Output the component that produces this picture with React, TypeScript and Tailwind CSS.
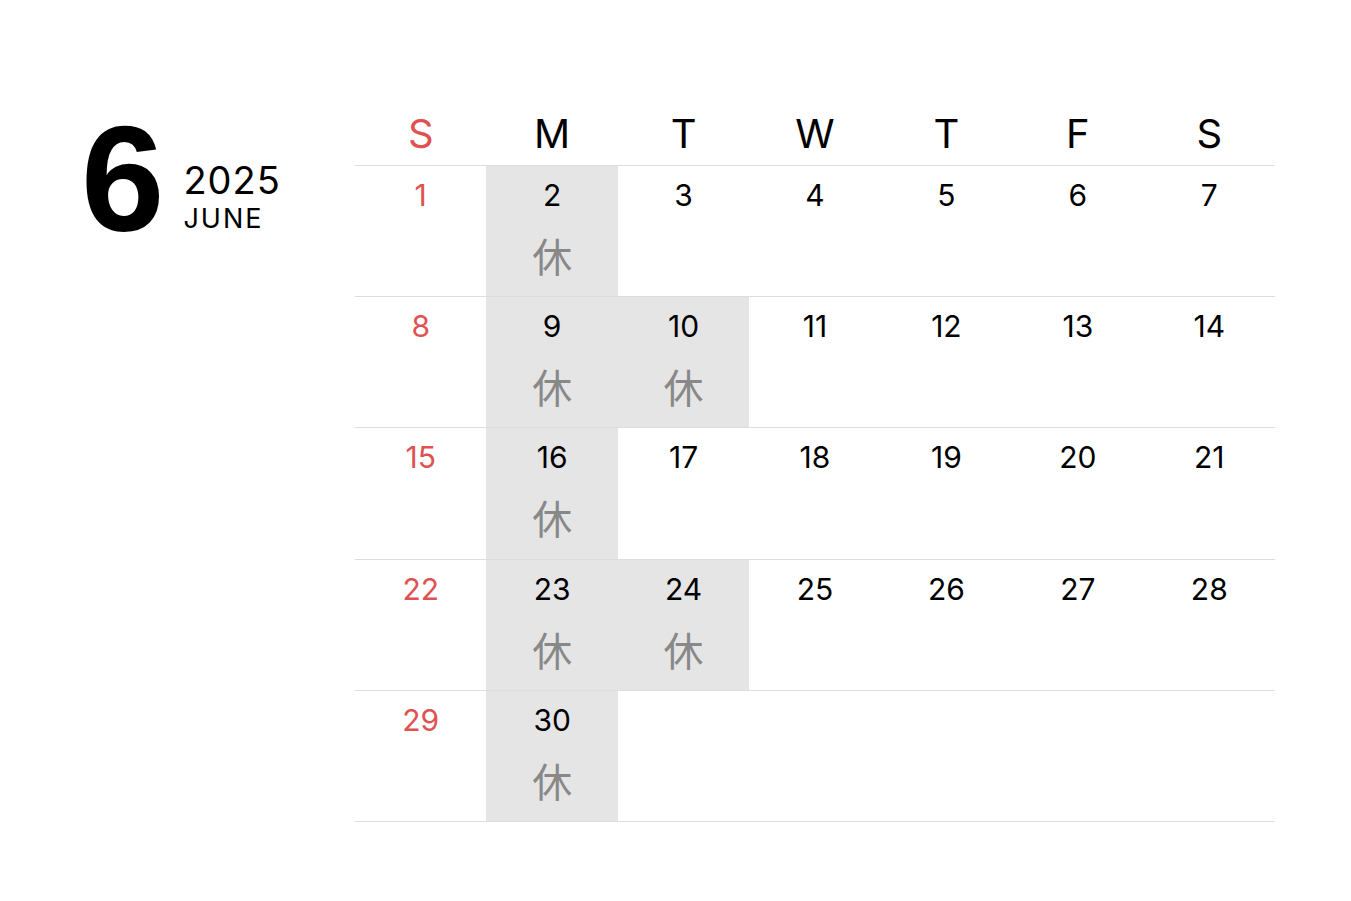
import React from "react";

const HEAD = ["S", "M", "T", "W", "T", "F", "S"];
const OFF = new Set([2, 9, 10, 16, 23, 24, 30]);

export default function App() {
  const cells: (number | null)[] = [];
  for (let d = 1; d <= 30; d++) cells.push(d);
  while (cells.length < 35) cells.push(null);
  const rows: (number | null)[][] = [];
  for (let i = 0; i < 35; i += 7) rows.push(cells.slice(i, i + 7));

  return (
    <div
      className="w-[1351px] h-[901px] bg-white flex pt-[100px] text-black"
      style={{ fontFamily: "Inter, 'Noto Sans CJK JP', sans-serif" }}
    >
      <div className="w-[355px] shrink-0 pl-[81px] pt-[4px] flex items-start">
        <div
          className="text-[150px] leading-[150px] font-bold"
          style={{ fontFamily: "'Liberation Sans', Arial, sans-serif" }}
        >
          6
        </div>
        <div className="ml-[19px] mt-[59px] flex flex-col">
          <div className="text-[38px] leading-[34px] tracking-[1px]">2025</div>
          <div className="text-[27px] leading-[24px] tracking-[2px] mt-[10px]">JUNE</div>
        </div>
      </div>
      <div className="w-[920px] shrink-0">
        <div className="grid grid-cols-7 h-[66px] border-b border-[#dddddd]">
          {HEAD.map((h, i) => (
            <div
              key={i}
              className={`flex items-center justify-center pt-[2px] text-[40px] leading-none ${
                i === 0 ? "text-[#e05252]" : "text-black"
              }`}
            >
              {h}
            </div>
          ))}
        </div>
        {rows.map((r, ri) => (
          <div key={ri} className="grid grid-cols-7 h-[131.2px] border-b border-[#dddddd]">
            {r.map((d, ci) => (
              <div
                key={ci}
                className={`flex flex-col items-center pt-[13px] ${
                  d !== null && OFF.has(d) ? "bg-[#e5e5e5]" : ""
                }`}
              >
                {d !== null && (
                  <div
                    className={`text-[30px] leading-[32px] ${
                      ci === 0 ? "text-[#e05252]" : "text-black"
                    }`}
                  >
                    {d}
                  </div>
                )}
                {d !== null && OFF.has(d) && (
                  <div
                    className="mt-[22px] text-[40px] leading-[44px] text-[#888888]"
                    style={{ fontFamily: "'Noto Sans CJK JP', sans-serif" }}
                  >
                    休
                  </div>
                )}
              </div>
            ))}
          </div>
        ))}
      </div>
    </div>
  );
}
